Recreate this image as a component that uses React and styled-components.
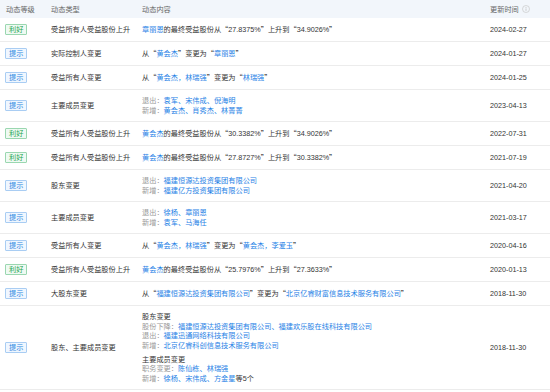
import styled, { createGlobalStyle } from 'styled-components';

const GlobalStyle = createGlobalStyle`
    body {
        margin: 0;
        background: #fff;
        font-family: "Liberation Sans", "Noto Sans CJK SC", sans-serif;
    }
`;

const rows = [
    { level: 'good', type: '受益所有人受益股份上升', date: '2024-02-27', content: [['章丽恩', true], ['的最终受益股份从“27.8375%”上升到“34.9026%”']] },
    { level: 'tip', type: '实际控制人变更', date: '2024-01-27', content: [['从“'], ['黄会杰', true], ['”变更为“'], ['章丽恩', true], ['”']] },
    { level: 'tip', type: '受益所有人变更', date: '2024-01-25', content: [['从“'], ['黄会杰，林瑞强', true], ['”变更为“'], ['林瑞强', true], ['”']] },
    { level: 'tip', type: '主要成员变更', date: '2023-04-13', lines: [['退出：', '袁军、宋伟成、倪海明'], ['新增：', '黄会杰、肖秀杰、林菁菁']] },
    { level: 'good', type: '受益所有人受益股份上升', date: '2022-07-31', content: [['黄会杰', true], ['的最终受益股份从“30.3382%”上升到“34.9026%”']] },
    { level: 'good', type: '受益所有人受益股份上升', date: '2021-07-19', content: [['黄会杰', true], ['的最终受益股份从“27.8727%”上升到“30.3382%”']] },
    { level: 'tip', type: '股东变更', date: '2021-04-20', lines: [['退出：', '福建恒源达投资集团有限公司'], ['新增：', '福建亿方投资集团有限公司']] },
    { level: 'tip', type: '主要成员变更', date: '2021-03-17', lines: [['退出：', '徐杨、章丽恩'], ['新增：', '袁军、马海任']] },
    { level: 'tip', type: '受益所有人变更', date: '2020-04-16', content: [['从“'], ['黄会杰，林瑞强', true], ['”变更为“'], ['黄会杰，李爱玉', true], ['”']] },
    { level: 'good', type: '受益所有人受益股份上升', date: '2020-01-13', content: [['黄会杰', true], ['的最终受益股份从“25.7976%”上升到“27.3633%”']] },
    { level: 'tip', type: '大股东变更', date: '2018-11-30', content: [['从“'], ['福建恒源达投资集团有限公司', true], ['”变更为“'], ['北京亿睿财富信息技术服务有限公司', true], ['”']] },
];

const lastGroups = [
    { title: '股东变更', lines: [['股份下降：', '福建恒源达投资集团有限公司、福建欢乐股在线科技有限公司'], ['退出：', '福建迅通网络科技有限公司'], ['新增：', '北京亿睿科创信息技术服务有限公司']] },
    { title: '主要成员变更', lines: [['职务变更：', '陈仙栋、林瑞强'], ['新增：', '徐杨、宋伟成、方金星', '等5个']] },
];

// quotes drawn full width, as in the CJK font
const withQuotes = text =>
    text.split(/([“”])/).map((part, i) => (part === '“' || part === '”' ? <Quote key={i}>{part}</Quote> : part));

function InfoIcon() {
    return (
        <svg width="8" height="8" viewBox="0 0 16 16">
            <circle cx="8" cy="8" r="7" fill="none" stroke="#c4c4c4" strokeWidth="1.3" />
            <circle cx="8" cy="4.8" r="1" fill="#c4c4c4" />
            <rect x="7.2" y="6.8" width="1.6" height="5" fill="#c4c4c4" />
        </svg>
    );
}

function Level({ level }) {
    return <Badge $good={level === 'good'}>{level === 'good' ? '利好' : '提示'}</Badge>;
}

function Lines({ lines }) {
    return lines.map(([label, names, tail], i) => (
        <Line key={i}>
            <Label>{label}</Label>
            <Link>{names}</Link>
            {tail}
        </Line>
    ));
}

export default function App() {
    return (
        <>
            <GlobalStyle />
            <Table>
                <Head>
                    <span>动态等级</span>
                    <span>动态类型</span>
                    <span>动态内容</span>
                    <HeadDate>更新时间 <InfoIcon /></HeadDate>
                </Head>
                {rows.map((r, i) => (
                    <Row key={i}>
                        <Cell><Level level={r.level} /></Cell>
                        <Cell><Line>{r.type}</Line></Cell>
                        <Cell>
                            {r.content
                                ? <Line>{r.content.map(([t, link], j) => (link ? <Link key={j}>{t}</Link> : <span key={j}>{withQuotes(t)}</span>))}</Line>
                                : <Lines lines={r.lines} />}
                        </Cell>
                        <Cell><Line>{r.date}</Line></Cell>
                    </Row>
                ))}
                <Row>
                    <Cell><Level level="tip" /></Cell>
                    <Cell><Line>股东、主要成员变更</Line></Cell>
                    <Cell>
                        {lastGroups.map((g, i) => (
                            <Group key={i}>
                                <Line>{g.title}</Line>
                                <Lines lines={g.lines} />
                            </Group>
                        ))}
                    </Cell>
                    <Cell><Line>2018-11-30</Line></Cell>
                </Row>
            </Table>
        </>
    );
}

const Table = styled.div`
    width: 550px;
    font-size: 7.2px;
    color: #333;
`;

const Head = styled.div`
    display: grid;
    grid-template-columns: 51px 91px 348px 60px;
    align-items: center;
    height: 18px;
    background: #f2f6fb;
    color: #666;
    font-size: 7.2px;
    & > span:first-child {
        padding-left: 6px;
    }
`;

const HeadDate = styled.span`
    display: flex;
    align-items: center;
    gap: 3px;
`;

const Row = styled.div`
    display: grid;
    grid-template-columns: 51px 91px 348px 60px;
    align-items: center;
    box-sizing: border-box;
    min-height: 24px;
    padding: 6px 0;
    border-bottom: 1px solid #ececec;
    & > div:first-child {
        padding-left: 5px;
    }
`;

const Cell = styled.div`
    white-space: nowrap;
`;

const Badge = styled.span`
    display: inline-flex;
    align-items: center;
    box-sizing: border-box;
    height: 11px;
    padding: 0 3px;
    border: 1px solid ${p => (p.$good ? '#9ad7b0' : '#a9cdf3')};
    border-radius: 1px;
    background: ${p => (p.$good ? '#effaf3' : '#f0f7ff')};
    color: ${p => (p.$good ? '#1ea552' : '#2a86e0')};
    line-height: 1;
    vertical-align: top;
`;

const Link = styled.span`
    color: #1f82e6;
`;

const Quote = styled.span`
    font-family: "Noto Sans CJK SC", sans-serif;
`;

const Line = styled.div`
    height: 9.5px;
    line-height: 9.5px;
`;

const Label = styled.span`
    color: #999;
`;

const Group = styled.div`
    & + & {
        margin-top: 4.5px;
    }
`;
